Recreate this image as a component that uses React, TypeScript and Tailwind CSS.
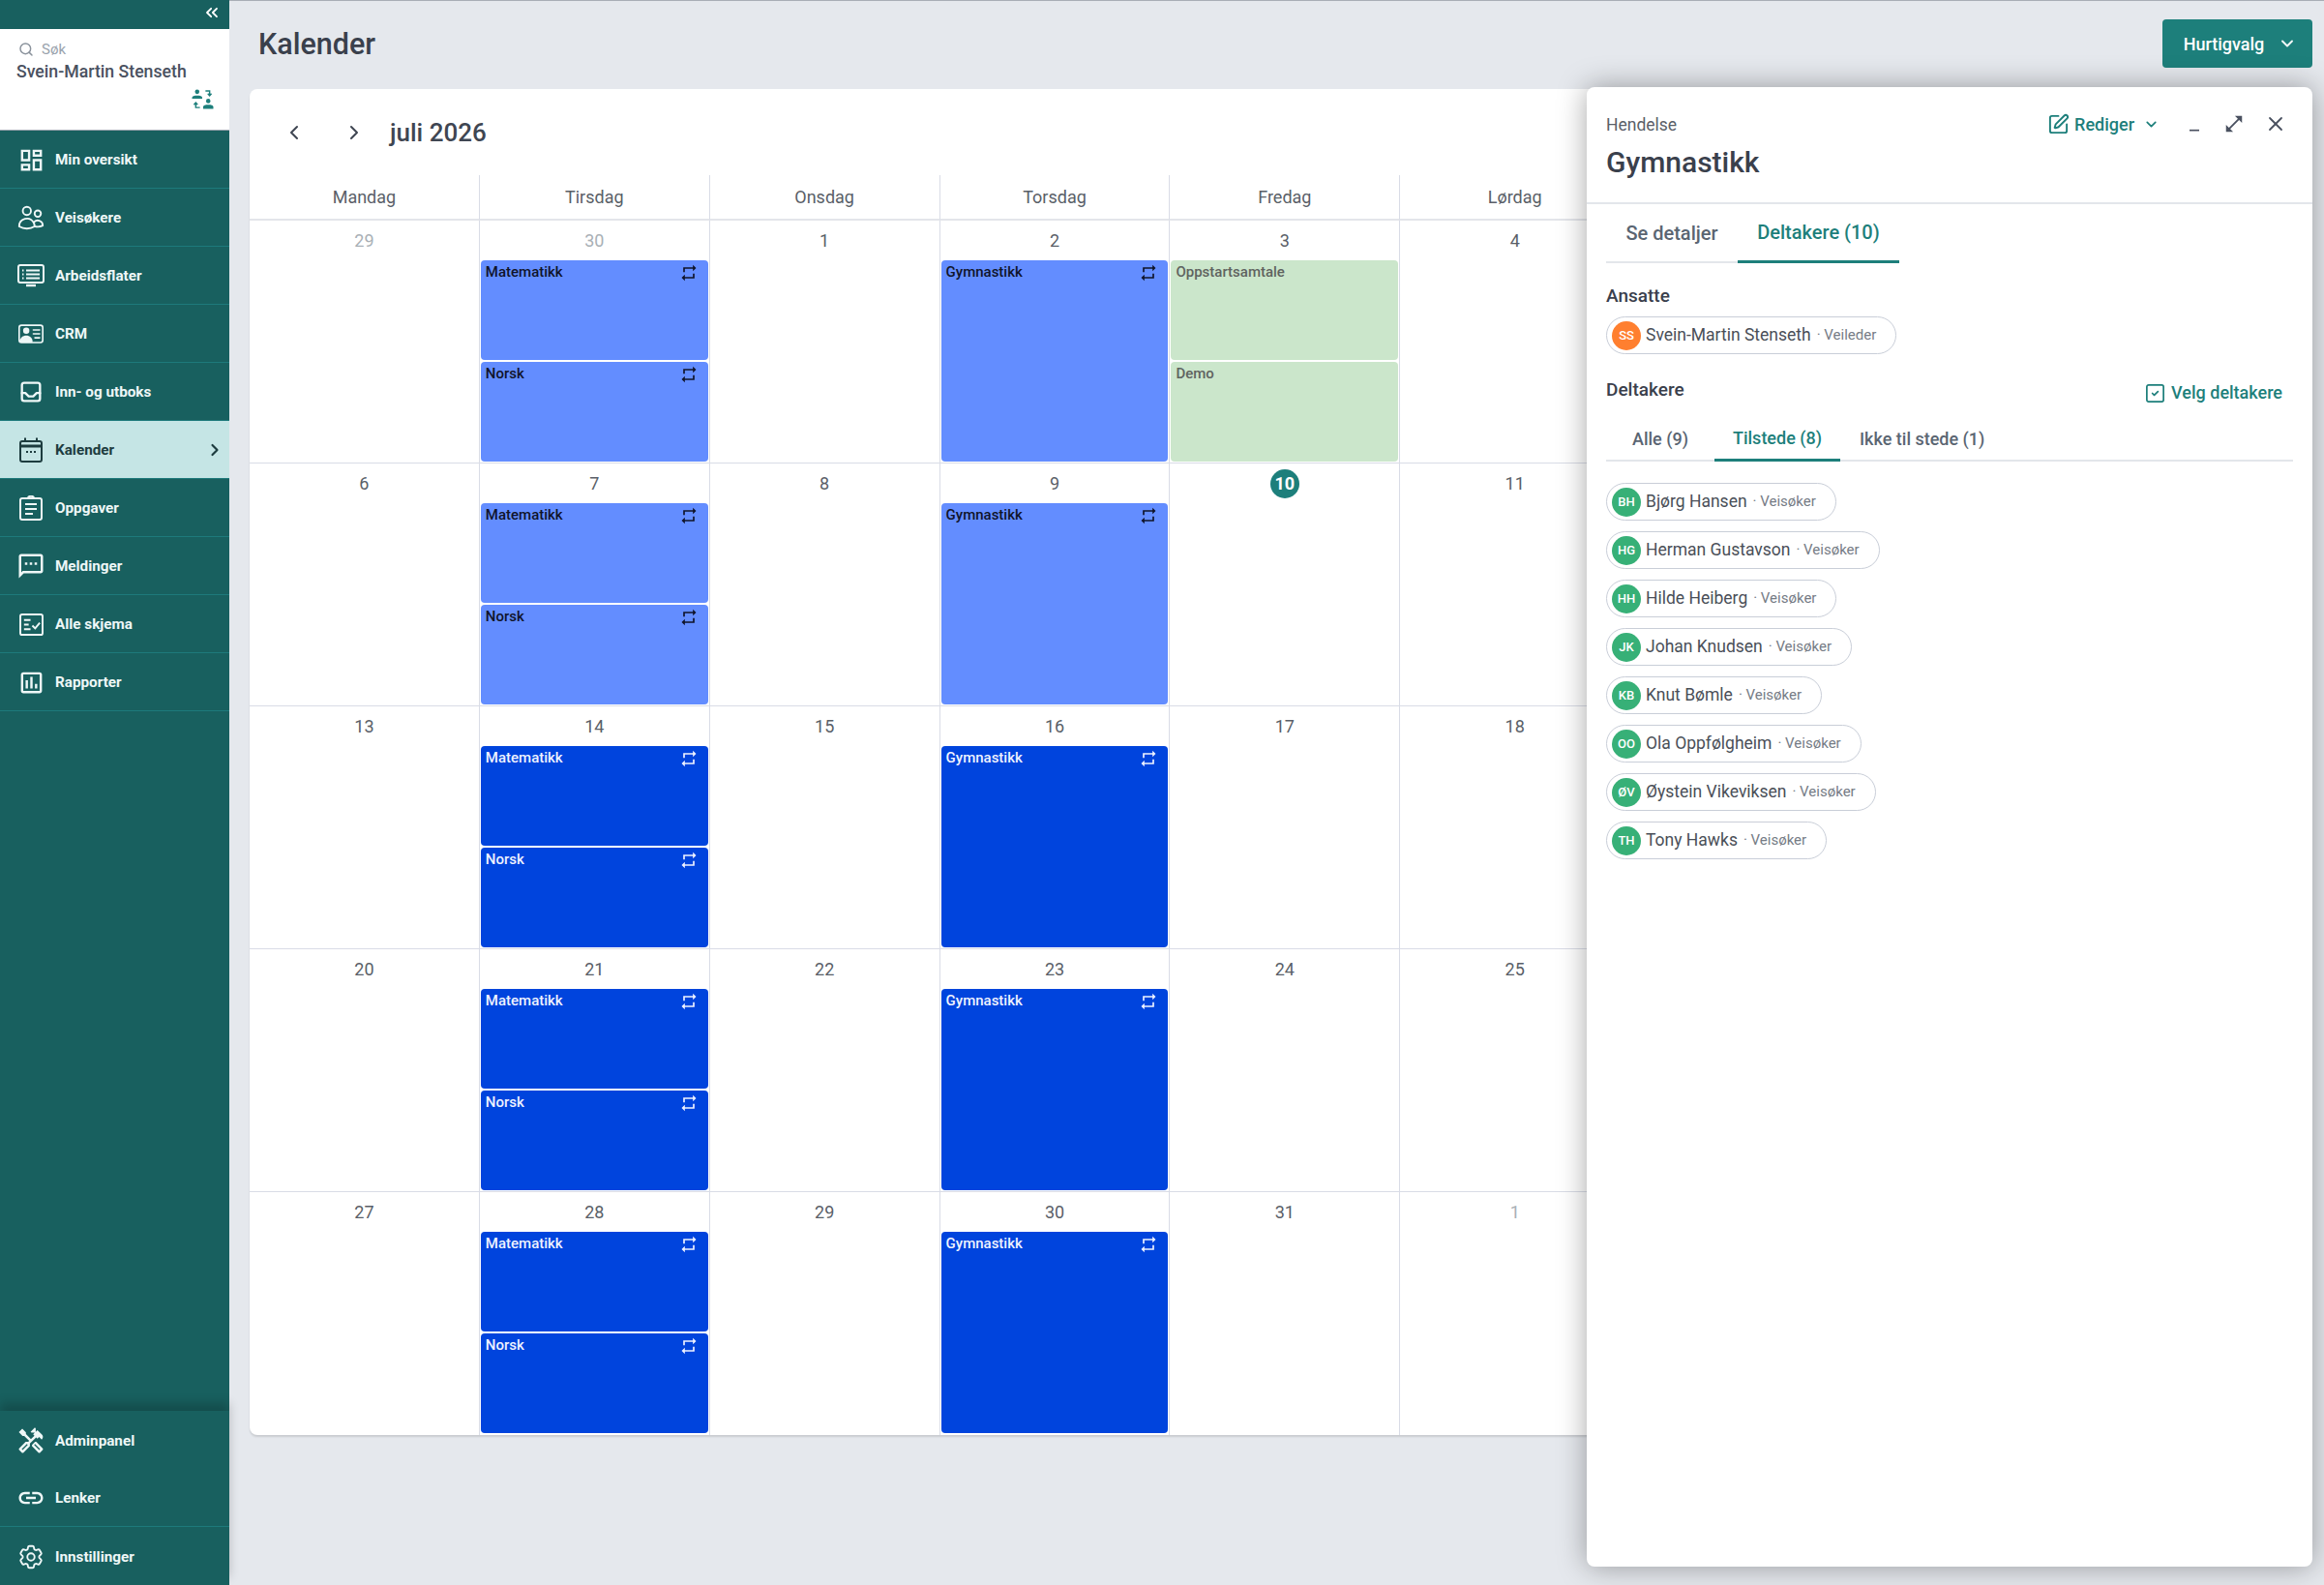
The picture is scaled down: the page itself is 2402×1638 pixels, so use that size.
import React from 'react';
import { ChevronDown, ChevronLeft, ChevronRight, ChevronsLeft, Search, SquareCheck, SquarePen, X } from 'lucide-react';
import { BsPersonVcard } from 'react-icons/bs';
import { HiOutlineCog6Tooth, HiOutlineUsers } from 'react-icons/hi2';
import { MdLink, MdOutlineAssessment, MdOutlineDashboard, MdOutlineHandyman, MdOutlineMinimize, MdOutlineOpenInFull, MdOutlineSms, MdRepeat } from 'react-icons/md';
import { TbInbox } from 'react-icons/tb';

const MonitorIcon = () => (
  <svg viewBox="0 0 28 24" className="w-7 h-6" fill="none" stroke="currentColor" strokeWidth="2">
    <rect x="1" y="1" width="26" height="18" rx="2" />
    <path d="M9 22h10" strokeWidth="2.4" />
    <path d="M9 6.500h14M9 10.500h14M9 14.500h14M5 6.500h1.500M5 10.500h1.500M5 14.500h1.500" />
  </svg>
);

const CalendarIcon = () => (
  <svg viewBox="0 0 24 26" className="w-6 h-[26px]" fill="none" stroke="currentColor" strokeWidth="2">
    <rect x="1" y="4" width="22" height="21" rx="2" />
    <path d="M1 9h22" strokeWidth="3" />
    <path d="M6 0.500v4M18 0.500v4" />
    <path d="M7 15h2M11 15h2M15 15h2" />
  </svg>
);

const ClipboardIcon = () => (
  <svg viewBox="0 0 24 26" className="w-6 h-[26px]" fill="none" stroke="currentColor" strokeWidth="2">
    <rect x="1" y="3" width="22" height="22" rx="2" />
    <path d="M9 3c0-3 6-3 6 0" />
    <path d="M6 9h12M6 14h12M6 19h8" />
  </svg>
);

const FormIcon = () => (
  <svg viewBox="0 0 26 24" className="w-[25px] h-[23px]" fill="none" stroke="currentColor" strokeWidth="2">
    <rect x="1" y="1" width="24" height="22" rx="2" />
    <path d="M5 7h7M5 12h5M5 17h7" />
    <path d="M14 13l3 3 5-6" />
  </svg>
);

// two people swapping places, next to the user name
const SwapPeopleIcon = () => (
  <svg viewBox="0 0 24 22" className="w-[23px] h-[21px] text-[#1d7f7b]" fill="currentColor">
    <circle cx="6" cy="3" r="2.4" />
    <path d="M0.500 9.500c0-2 2.500-2.500 5.500-2.500s5.500 .5 5.500 2.500v1H0.500z" />
    <circle cx="18" cy="13" r="2.400" />
    <path d="M12.500 19.500c0-2 2.500-2.500 5.500-2.500s5.500 .5 5.500 2.500v2h-11z" />
    <path d="M15 2h4.500v4M17.500 5l2 2.200 2-2.200M9 20H4.500v-4M2.500 17l2-2.200 2 2.200" fill="none" stroke="currentColor" strokeWidth="1.500" />
  </svg>
);

const navItems = [
  { label: 'Min oversikt', icon: <MdOutlineDashboard size={29} /> },
  { label: 'Veisøkere', icon: <HiOutlineUsers size={30} /> },
  { label: 'Arbeidsflater', icon: <MonitorIcon /> },
  { label: 'CRM', icon: <BsPersonVcard size={26} /> },
  { label: 'Inn- og utboks', icon: <TbInbox size={28} /> },
  { label: 'Kalender', icon: <CalendarIcon />, active: true },
  { label: 'Oppgaver', icon: <ClipboardIcon /> },
  { label: 'Meldinger', icon: <MdOutlineSms size={30} /> },
  { label: 'Alle skjema', icon: <FormIcon /> },
  { label: 'Rapporter', icon: <MdOutlineAssessment size={29} /> },
];

const NavRow = ({ label, icon, active, border = true }: { label: string; icon: React.ReactNode; active?: boolean; border?: boolean }) => (
  <div className={`h-[60px] pt-[1px] flex items-center shrink-0 ${border ? 'border-b border-[#1d7a7b]' : ''} ${active ? 'bg-[#c5e5e5] text-[#1d3c3f]' : 'text-[#eef7f7]'}`}>
    <div className="w-[57px] pl-[7px] flex justify-center items-center">{icon}</div>
    <span className="flex-1 pt-[1px] text-[15.25px] font-bold">{label}</span>
    {active && <ChevronRight size={20} strokeWidth={2.6} className="mr-[5px]" />}
  </div>
);

const Sidebar = () => (
  <aside className="w-[237px] h-full shrink-0 flex flex-col bg-[#18605f]">
    <div className="h-[30px] flex items-center justify-end pr-[8px] pb-[4px] text-white">
      <ChevronsLeft size={20} strokeWidth={2.2} />
    </div>
    <div className="h-[105px] bg-white border-b border-[#9aa3ad] px-[17px] pt-[11px]">
      <div className="flex items-center gap-[8px] pl-[2px] text-[15px] leading-[20px] text-[#9aa3ad]">
        <Search size={16} strokeWidth={2.2} className="text-[#8a929c]" />
        <span>Søk</span>
      </div>
      <div className="text-[17.7px] leading-[27px] font-medium text-[#4a5160]">Svein-Martin Stenseth</div>
      <div className="flex justify-end -mr-[1px] mt-[4px]">
        <SwapPeopleIcon />
      </div>
    </div>
    <nav className="flex-1 flex flex-col">
      {navItems.map((item) => (
        <NavRow key={item.label} {...item} />
      ))}
    </nav>
    <div className="shadow-[0_-8px_10px_rgba(0,0,0,0.2)]">
      <NavRow label="Adminpanel" icon={<MdOutlineHandyman size={30} />} border={false} />
      <NavRow label="Lenker" icon={<MdLink size={30} />} />
      <NavRow label="Innstillinger" icon={<HiOutlineCog6Tooth size={30} />} border={false} />
    </div>
  </aside>
);

type CalEvent = { title: string; repeat?: boolean };

const EventBlock = ({ event, tone, grow }: { event: CalEvent; tone: 'light' | 'dark' | 'green'; grow?: boolean }) => {
  const toneClass = tone === 'light' ? 'bg-[#638dff] text-[#10142a]' : tone === 'dark' ? 'bg-[#0044dd] text-[#eef2ff]' : 'bg-[#cbe6cb] text-[#5f6360]';
  return (
    <div className={`rounded-[4px] pl-[5px] pr-[10px] pt-[3px] flex justify-between items-start ${grow ? 'h-[208px]' : 'h-[103px]'} ${toneClass}`}>
      <span className="text-[15px] leading-[18px] font-medium">{event.title}</span>
      {event.repeat && <MdRepeat size={20} />}
    </div>
  );
};

const weekDays = ['Mandag', 'Tirsdag', 'Onsdag', 'Torsdag', 'Fredag', 'Lørdag', 'Søndag'];

const weeks = [
  { days: [29, 30, 1, 2, 3, 4, 5], tone: 'light' as const, muted: [0, 1] },
  { days: [6, 7, 8, 9, 10, 11, 12], tone: 'light' as const, muted: [] },
  { days: [13, 14, 15, 16, 17, 18, 19], tone: 'dark' as const, muted: [] },
  { days: [20, 21, 22, 23, 24, 25, 26], tone: 'dark' as const, muted: [] },
  { days: [27, 28, 29, 30, 31, 1, 2], tone: 'dark' as const, muted: [5, 6] },
];

const DayCell = ({ week, col, weekIndex }: { week: (typeof weeks)[number]; col: number; weekIndex: number }) => {
  const day = week.days[col];
  const muted = (week.muted as number[]).includes(col);
  const today = weekIndex === 1 && col === 4;
  return (
    <div className={`h-[251px] px-[1px] ${col < 6 ? 'border-r border-[#d9dce6]' : ''} ${weekIndex < 4 ? 'border-b border-[#d9dce6]' : ''}`}>
      <div className="h-[41px] flex items-center justify-center text-[18px]">
        {today ? (
          <span className="w-[30px] h-[30px] rounded-full bg-[#1d7f7b] text-white font-bold flex items-center justify-center">{day}</span>
        ) : (
          <span className={muted ? 'text-[#a9b0b6]' : 'text-[#5a5f68]'}>{day}</span>
        )}
      </div>
      <div className="flex flex-col gap-[2px]">
        {col === 1 && (
          <>
            <EventBlock event={{ title: 'Matematikk', repeat: true }} tone={week.tone} />
            <EventBlock event={{ title: 'Norsk', repeat: true }} tone={week.tone} />
          </>
        )}
        {col === 3 && <EventBlock event={{ title: 'Gymnastikk', repeat: true }} tone={week.tone} grow />}
        {col === 4 && weekIndex === 0 && (
          <>
            <EventBlock event={{ title: 'Oppstartsamtale' }} tone="green" />
            <EventBlock event={{ title: 'Demo' }} tone="green" />
          </>
        )}
      </div>
    </div>
  );
};

const Calendar = () => (
  <div className="w-[1665px] shrink-0 bg-white rounded-lg shadow-[0_2px_2px_rgba(0,0,0,0.12)]">
    <div className="h-[89px] flex items-center pl-[34px] text-[#3f4652]">
      <ChevronLeft size={24} strokeWidth={2} />
      <ChevronRight size={24} strokeWidth={2} className="ml-[38px]" />
      <span className="ml-[25px] pt-[1px] text-[26px] font-medium">juli 2026</span>
    </div>
    <div className="grid grid-cols-7">
      {weekDays.map((d, i) => (
        <div key={d} className={`h-[47px] flex items-center justify-center text-[18px] text-[#5a5f68] border-b-2 border-[#e3e5ea] ${i < 6 ? 'border-r border-r-[#d9dce6]' : ''}`}>
          {d}
        </div>
      ))}
      {weeks.map((week, w) =>
        week.days.map((_, col) => <DayCell key={`${w}-${col}`} week={week} col={col} weekIndex={w} />),
      )}
    </div>
  </div>
);

const Chip = ({ initials, name, role, orange }: { initials: string; name: string; role: string; orange?: boolean }) => (
  <div className="h-[39px] w-fit flex items-center rounded-full border border-[#c9ced8] pl-[5px] pr-[20px]">
    <span className={`w-[30px] h-[30px] rounded-full flex items-center justify-center text-[13px] font-medium text-white ${orange ? 'bg-[#ff7f2f]' : 'bg-[#37b077]'}`}>{initials}</span>
    <span className="ml-[5px] text-[17.5px] text-[#4a4f58]">{name}</span>
    <span className="ml-[6px] text-[15px] text-[#767c86]">· {role}</span>
  </div>
);

const participants = [
  ['BH', 'Bjørg Hansen'],
  ['HG', 'Herman Gustavson'],
  ['HH', 'Hilde Heiberg'],
  ['JK', 'Johan Knudsen'],
  ['KB', 'Knut Bømle'],
  ['OO', 'Ola Oppfølgheim'],
  ['ØV', 'Øystein Vikeviksen'],
  ['TH', 'Tony Hawks'],
];

const EventPanel = () => (
  <div className="absolute top-[89px] right-[12px] w-[750px] h-[1529px] bg-white rounded-lg shadow-[0_0_30px_rgba(0,0,0,0.35)]">
    <div className="h-[121px] border-b-2 border-[#e3e6eb] px-[20px] pt-[24px] relative">
      <div className="text-[17.5px] leading-[30px] text-[#5a5f68]">Hendelse</div>
      <div className="text-[30px] leading-[36px] mt-[6px] font-medium text-[#3a404c]">Gymnastikk</div>
      <div className="absolute top-[23px] right-[26px] h-[30px] flex items-center text-[#1d7f7b]">
        <SquarePen size={23} strokeWidth={2} />
        <span className="ml-[5px] text-[18px] font-medium">Rediger</span>
        <ChevronDown size={17} strokeWidth={2.4} className="ml-[9px]" />
        <div className="ml-[26px] flex items-center gap-[20px] text-[#4a5160]">
          <MdOutlineMinimize size={20} />
          <MdOutlineOpenInFull size={22} />
          <X size={24} strokeWidth={1.8} />
        </div>
      </div>
    </div>
    <div className="px-[20px]">
      <div className="flex w-fit h-[61px] text-[20px] font-medium">
        <div className="w-[136px] flex items-center justify-center text-[#5a6572] border-b-2 border-[#e3e6eb]">Se detaljer</div>
        <div className="w-[167px] flex items-center justify-center text-[#1d7f7b] border-b-[3px] border-[#1d7f7b]">Deltakere (10)</div>
      </div>
      <div className="mt-[21px] text-[19px] leading-[26px] font-medium text-[#3a404c]">Ansatte</div>
      <div className="mt-[8px]">
        <Chip initials="SS" name="Svein-Martin Stenseth" role="Veileder" orange />
      </div>
      <div className="mt-[24px] flex justify-between items-start pr-[11px]">
        <span className="text-[19px] leading-[26px] font-medium text-[#3a404c]">Deltakere</span>
        <div className="flex items-center gap-[5px] mt-[3px] text-[18px] leading-[26px] font-medium text-[#1d7f7b]">
          <SquareCheck size={23} strokeWidth={1.8} />
          Velg deltakere
        </div>
      </div>
      <div className="mt-[12px] w-[710px] h-[46px] flex border-b-2 border-[#e3e6eb] text-[18px] font-medium text-[#5a6572]">
        <div className="w-[112px] flex items-center justify-center">Alle (9)</div>
        <div className="w-[130px] flex items-center justify-center text-[#1d7f7b] border-b-[3px] border-[#1d7f7b] h-[46px]">Tilstede (8)</div>
        <div className="ml-[20px] flex items-center">Ikke til stede (1)</div>
      </div>
      <div className="mt-[22px] flex flex-col gap-[11px]">
        {participants.map(([initials, name]) => (
          <Chip key={initials} initials={initials} name={name} role="Veisøker" />
        ))}
      </div>
    </div>
  </div>
);

export default function App() {
  return (
    <div className="w-[2402px] h-[1638px] flex overflow-hidden font-['Roboto',sans-serif] bg-[#e5e8ed]">
      <Sidebar />
      <main className="relative flex-1 min-w-0 pl-[21px] border-t border-[#a8aeb6]">
        <div className="h-[91px] flex items-center pl-[9px] pb-[2px]">
          <h1 className="text-[30.5px] font-medium text-[#3a404c]">Kalender</h1>
        </div>
        <Calendar />
        <button className="absolute top-[19px] right-[12px] w-[155px] h-[50px] rounded-[4px] bg-[#1d7f7b] text-white text-[18px] font-medium flex items-center justify-center gap-[14px] pl-[6px]">
          Hurtigvalg
          <ChevronDown size={20} strokeWidth={2.2} />
        </button>
        <EventPanel />
      </main>
    </div>
  );
}
